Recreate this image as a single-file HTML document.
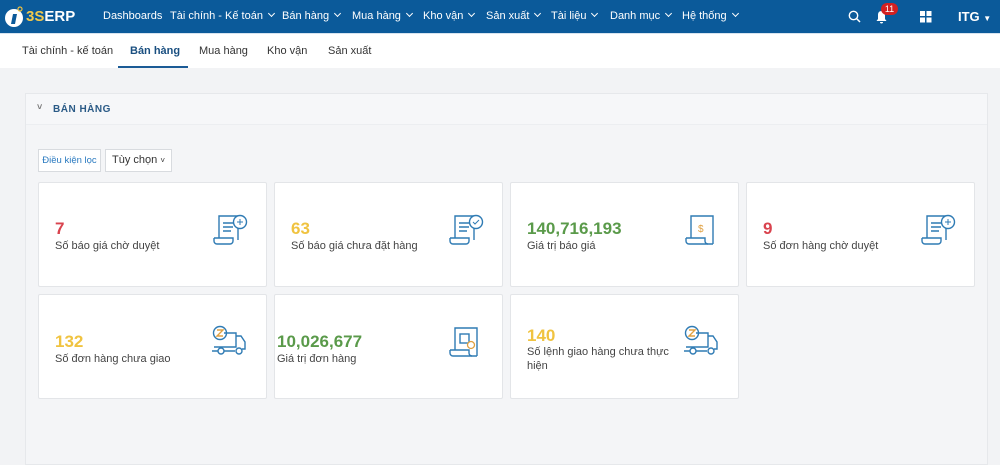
<!DOCTYPE html>
<html><head><meta charset="utf-8"><style>
*{box-sizing:border-box;margin:0;padding:0}
body{width:1000px;height:465px;overflow:hidden;background:#f2f3f5;font-family:"Liberation Sans",Arial,sans-serif;position:relative}
.nav{position:absolute;left:0;top:0;width:1000px;height:33px;background:#0b5a9a;color:#fff;font-size:11px}
.nav span{position:absolute;top:10px;white-space:nowrap}
.cv{display:inline-block;width:5px;height:5px;border-right:1.2px solid #fff;border-bottom:1.2px solid #fff;transform:rotate(45deg);margin-left:6px;position:relative;top:-3px}
.tabs{position:absolute;left:0;top:33px;width:1000px;height:35px;background:#fff;border-top:1px solid #d6e3ef;font-size:11px;color:#333}
.tabs span{position:absolute;top:11px}
.panel{position:absolute;left:25px;top:93px;width:963px;height:372px;background:#f4f5f7;border:1px solid #e6e8eb}
.ph{height:31px;background:#f6f7f9;border-bottom:1px solid #eceef1;font-size:10px;font-weight:bold;color:#2a5a86;letter-spacing:.5px;padding:10px 0 0 27px;position:relative}
.card{position:absolute;width:229px;height:105px;background:#fff;border:1px solid #e3e5e8;border-radius:2px}
.num{position:absolute;left:16px;font-size:17px;font-weight:bold}
.lbl{position:absolute;left:16px;font-size:11px;color:#444;line-height:14px}
.ic{position:absolute;right:18px;top:30px}
.btn{position:absolute;top:149px;height:23px;background:#fff;border:1px solid #d8dbdf;font-size:10px;padding-top:5px}
</style></head><body>
<div class="nav">
<svg style="position:absolute;left:4px;top:6px" width="22" height="22" viewBox="0 0 22 22"><circle cx="10" cy="12" r="9" fill="#fff"/><path d="M9 8 L13 8 L11 18 L7 18Z" fill="#0b5a9a"/><circle cx="16" cy="3" r="2" fill="none" stroke="#f0c040" stroke-width="1.2"/></svg>
<span style="left:26px;top:8px;font-size:15px;font-weight:bold"><b style="color:#f2c94c">3S</b>ERP</span>
<span style="left:103px">Dashboards</span>
<span style="left:170px">Tài chính - Kế toán<i class="cv"></i></span>
<span style="left:282px">Bán hàng<i class="cv"></i></span>
<span style="left:352px">Mua hàng<i class="cv"></i></span>
<span style="left:423px">Kho vận<i class="cv"></i></span>
<span style="left:486px">Sản xuất<i class="cv"></i></span>
<span style="left:551px">Tài liệu<i class="cv"></i></span>
<span style="left:610px">Danh mục<i class="cv"></i></span>
<span style="left:682px">Hệ thống<i class="cv"></i></span>
<svg style="position:absolute;left:848px;top:10px" width="13" height="13" viewBox="0 0 13 13"><circle cx="5.5" cy="5.5" r="4.2" fill="none" stroke="#fff" stroke-width="1.4"/><path d="M8.5 8.5L12 12" stroke="#fff" stroke-width="1.5"/></svg>
<svg style="position:absolute;left:875px;top:10px" width="13" height="14" viewBox="0 0 13 14"><path d="M6.5 1C3.8 1 3 3 3 5v4L1.5 11h10L10 9V5C10 3 9.2 1 6.5 1Z M5 12h3a1.5 1.5 0 0 1-3 0Z" fill="#fff"/></svg>
<div style="position:absolute;left:881px;top:3px;width:17px;height:12px;border-radius:6px;background:#d42020;font-size:9px;text-align:center;line-height:12px">11</div>
<svg style="position:absolute;left:920px;top:11px" width="12" height="12"><rect x="0" y="0" width="5" height="5" fill="#fff"/><rect x="6.5" y="0" width="5" height="5" fill="#fff"/><rect x="0" y="6.5" width="5" height="5" fill="#fff"/><rect x="6.5" y="6.5" width="5" height="5" fill="#fff"/></svg>
<span style="left:958px;top:9px;font-size:13px;font-weight:bold">ITG <small style="font-size:8px">▼</small></span>
</div>
<div class="tabs">
<span style="left:22px">Tài chính - kế toán</span>
<span style="left:130px;color:#1a4f80;font-weight:bold">Bán hàng</span>
<div style="position:absolute;left:118px;top:32px;width:70px;height:2px;background:#1b5b96"></div>
<span style="left:199px">Mua hàng</span>
<span style="left:267px">Kho vận</span>
<span style="left:328px">Sản xuất</span>
</div>
<div class="panel"><div class="ph"><span style="position:absolute;left:11px;top:8px;font-size:9px;color:#777">˅</span>BÁN HÀNG</div></div>
<div class="btn" style="left:38px;width:63px;color:#2a7ac0;text-align:center;font-size:9.5px">Điều kiện lọc</div>
<div class="btn" style="left:105px;width:67px;color:#333;font-size:11px;text-align:center;padding-top:4px">Tùy chọn <small style="font-size:8px">˅</small></div>

<svg width="0" height="0" style="position:absolute"><defs>
<g id="doc" fill="none" stroke="#2f7bb4" stroke-width="1.4"><path d="M7 25V3h19v24M2 25h19v3a3 3 0 0 1-3 3H5a3 3 0 0 1-3-3v-3" /><path d="M11 10h10M11 14h10M11 18h8" /></g>
<g id="truck" fill="none" stroke="#2f7bb4" stroke-width="1.4"><path d="M4 22h22v-14h-12M26 11h5l4 6v7h-3M2 26h6M14 26h11"/><circle cx="11" cy="26" r="3"/><circle cx="29" cy="26" r="3"/><circle cx="10" cy="8" r="6.5"/><path d="M7 5h6l-6 6h6" stroke="#e0a040"/></g>
</defs></svg>

<div class="card" style="left:38px;top:182px"><div class="num" style="top:36px;color:#d9434e">7</div><div class="lbl" style="top:56px">Số báo giá chờ duyệt</div>
<svg class="ic" width="36" height="34"><use href="#doc"/><circle cx="28" cy="9" r="6.5" fill="#fff" stroke="#2f7bb4" stroke-width="1.4"/><path d="M25 9h6M28 6v6" stroke="#2f7bb4"/></svg></div>
<div class="card" style="left:274px;top:182px"><div class="num" style="top:36px;color:#f0c340">63</div><div class="lbl" style="top:56px">Số báo giá chưa đặt hàng</div>
<svg class="ic" width="36" height="34"><use href="#doc"/><circle cx="28" cy="9" r="6.5" fill="#fff" stroke="#2f7bb4" stroke-width="1.4"/><path d="M25 9l2 2 4-4" stroke="#2f7bb4" fill="none"/></svg></div>
<div class="card" style="left:510px;top:182px"><div class="num" style="top:36px;color:#5a9a4a">140,716,193</div><div class="lbl" style="top:56px">Giá trị báo giá</div>
<svg class="ic" width="36" height="34"><g fill="none" stroke="#2f7bb4" stroke-width="1.4"><path d="M7 25V3h22v28M2 25h19v3a3 3 0 0 0 3 3h5"/><path d="M2 25v3a3 3 0 0 0 3 3h19"/></g><text x="14" y="19" font-size="10" fill="#e0a040" font-family="Liberation Sans">$</text></svg></div>
<div class="card" style="left:746px;top:182px"><div class="num" style="top:36px;color:#d9434e">9</div><div class="lbl" style="top:56px">Số đơn hàng chờ duyệt</div>
<svg class="ic" width="36" height="34"><use href="#doc"/><circle cx="28" cy="9" r="6.5" fill="#fff" stroke="#2f7bb4" stroke-width="1.4"/><path d="M25 9h6M28 6v6" stroke="#2f7bb4"/></svg></div>

<div class="card" style="left:38px;top:294px"><div class="num" style="top:37px;color:#f0c340">132</div><div class="lbl" style="top:57px">Số đơn hàng chưa giao</div>
<svg class="ic" width="38" height="32"><use href="#truck"/></svg></div>
<div class="card" style="left:274px;top:294px"><div class="num" style="left:2px;top:37px;color:#5a9a4a">10,026,677</div><div class="lbl" style="left:2px;top:57px">Giá trị đơn hàng</div>
<svg class="ic" width="36" height="34"><g fill="none" stroke="#2f7bb4" stroke-width="1.4"><path d="M7 25V3h22v28M2 25h19v3a3 3 0 0 0 3 3h5"/><path d="M2 25v3a3 3 0 0 0 3 3h19"/><rect x="12" y="9" width="9" height="9"/></g><circle cx="23" cy="20" r="3.5" fill="#fff" stroke="#e0a040" stroke-width="1.3"/></svg></div>
<div class="card" style="left:510px;top:294px"><div class="num" style="top:31px;color:#f0c340">140</div><div class="lbl" style="top:50px">Số lệnh giao hàng chưa thực<br>hiện</div>
<svg class="ic" width="38" height="32"><use href="#truck"/></svg></div>
</body></html>
